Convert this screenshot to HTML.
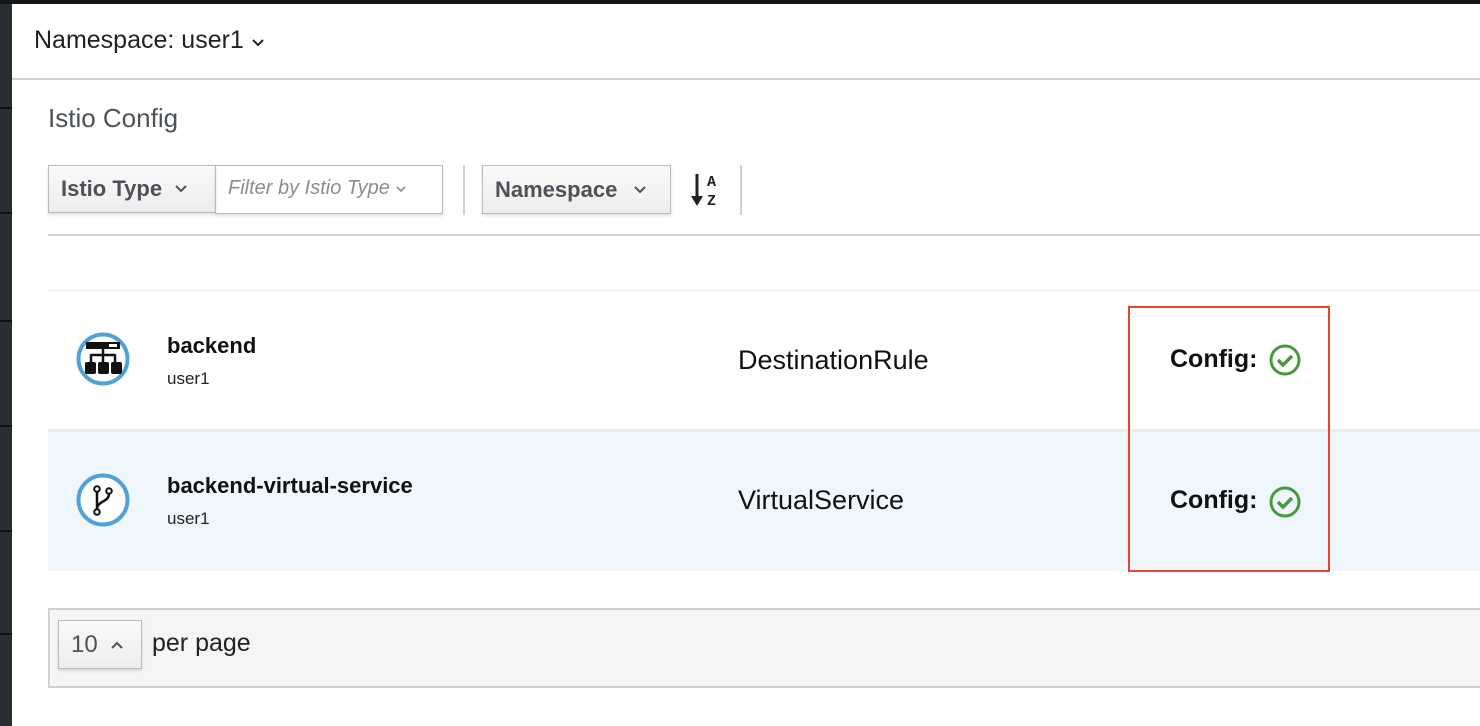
<!DOCTYPE html>
<html><head><meta charset="utf-8"><style>
*{box-sizing:border-box;margin:0;padding:0}
body{width:1480px;height:726px;overflow:hidden;background:#1e1f22;font-family:"Liberation Sans",sans-serif;position:relative}
.strip{position:absolute;left:0;top:0;width:12px;height:726px;background:#292e34}
.strip i{position:absolute;left:0;width:12px;height:2px;background:#111}
.panel{position:absolute;left:12px;top:4px;right:0;bottom:0;background:#fff}
.a{position:absolute;white-space:nowrap}
.btn{position:absolute;border:1px solid #bbb;background:linear-gradient(#fafafa,#ededed);box-shadow:0 2px 3px rgba(0,0,0,.12);color:#4d5258;font-weight:bold;font-size:22px;display:flex;align-items:center}
.chev{display:inline-block}
</style></head><body>
<div class="strip"><i style="top:107px"></i><i style="top:212px"></i><i style="top:320px"></i><i style="top:425px"></i><i style="top:530px"></i><i style="top:633px"></i></div>
<div style="position:absolute;left:0;top:0;width:1480px;height:4px;background:#151515"></div>
<div class="panel"></div>
<div class="a" style="left:34px;top:26px;font-size:25px;color:#222">Namespace: user1 <svg class="chev" width="14" height="10" viewBox="0 0 14 10"><path d="M2 2L7 7L12 2" fill="none" stroke="#222" stroke-width="2"/></svg></div>
<div class="a" style="left:12px;top:78px;width:1468px;height:2px;background:#d1d1d1"></div>
<div class="a" style="left:48px;top:103px;font-size:26px;color:#4d5258">Istio Config</div>

<div class="btn" style="left:48px;top:165px;width:168px;height:48px;padding-left:12px">Istio Type <svg class="chev" style="margin-left:12px" width="14" height="10" viewBox="0 0 14 10"><path d="M2 2L7 7L12 2" fill="none" stroke="#4d5258" stroke-width="2"/></svg></div>
<div class="a" style="left:215px;top:165px;width:228px;height:49px;border:1px solid #bbb;box-shadow:0 2px 3px rgba(0,0,0,.12);font-style:italic;color:#8b8d8f;font-size:20px;padding:11px 0 0 12px">Filter by Istio Type <svg class="chev" width="12" height="9" viewBox="0 0 12 9"><path d="M2 2L6 6L10 2" fill="none" stroke="#8b8d8f" stroke-width="1.6"/></svg></div>
<div class="a" style="left:463px;top:165px;width:2px;height:50px;background:#d1d1d1"></div>
<div class="btn" style="left:482px;top:165px;width:189px;height:49px;padding-left:12px">Namespace <svg class="chev" style="margin-left:16px" width="14" height="10" viewBox="0 0 14 10"><path d="M2 2L7 7L12 2" fill="none" stroke="#4d5258" stroke-width="2"/></svg></div>
<svg class="a" style="left:690px;top:170px" width="34" height="40" viewBox="0 0 34 40"><path d="M7 4V30" stroke="#222" stroke-width="3"/><path d="M1 26L7 36L13 26Z" fill="#222"/><text x="17" y="16" font-family="Liberation Mono" font-weight="bold" font-size="15" fill="#222">A</text><text x="17" y="35" font-family="Liberation Mono" font-weight="bold" font-size="15" fill="#222">Z</text></svg>
<div class="a" style="left:740px;top:165px;width:2px;height:50px;background:#d1d1d1"></div>
<div class="a" style="left:48px;top:234px;width:1432px;height:2px;background:#d1d1d1"></div>

<div class="a" style="left:48px;top:290px;width:1432px;height:1px;background:#ececec"></div>
<div class="a" style="left:48px;top:429px;width:1432px;height:142px;background:#eff7fd;border-top:3px solid #ececec"></div>

<svg class="a" style="left:76px;top:332px" width="54" height="54" viewBox="0 0 54 54"><circle cx="27" cy="27" r="24.5" fill="#fff" stroke="#4fa1d8" stroke-width="4"/><rect x="10" y="10" width="34" height="7" fill="#111"/><rect x="33" y="12" width="8" height="3" fill="#fff"/><path d="M27 17V23M15 23H39M15 22V31M27 22V31M39 22V31" stroke="#111" stroke-width="2.5" fill="none"/><rect x="9" y="30" width="11" height="12" rx="2" fill="#111"/><rect x="22" y="30" width="11" height="12" rx="2" fill="#111"/><rect x="35" y="30" width="11" height="12" rx="2" fill="#111"/></svg>
<div class="a" style="left:167px;top:333px;font-size:22px;font-weight:bold;color:#111">backend</div>
<div class="a" style="left:167px;top:369px;font-size:17px;color:#222">user1</div>
<div class="a" style="left:738px;top:345px;font-size:27px;color:#111">DestinationRule</div>
<div class="a" style="left:1170px;top:345px;font-size:25px;font-weight:bold;color:#111">Config:</div>
<svg class="a" style="left:1268px;top:343px" width="34" height="34" viewBox="0 0 34 34"><circle cx="17" cy="17" r="14" fill="none" stroke="#479b3b" stroke-width="3"/><path d="M10 17L15 22L24 13" fill="none" stroke="#479b3b" stroke-width="3.5"/></svg>

<svg class="a" style="left:76px;top:473px" width="54" height="54" viewBox="0 0 54 54"><circle cx="27" cy="27" r="24.5" fill="#fff" stroke="#4fa1d8" stroke-width="4"/><circle cx="21" cy="16" r="2.8" fill="none" stroke="#111" stroke-width="2"/><circle cx="33" cy="18" r="2.8" fill="none" stroke="#111" stroke-width="2"/><circle cx="21" cy="39" r="2.8" fill="none" stroke="#111" stroke-width="2"/><path d="M21 19V36M33 21C33 29 21 28 21 36" fill="none" stroke="#111" stroke-width="2.5"/></svg>
<div class="a" style="left:167px;top:473px;font-size:22px;font-weight:bold;color:#111">backend-virtual-service</div>
<div class="a" style="left:167px;top:509px;font-size:17px;color:#222">user1</div>
<div class="a" style="left:738px;top:485px;font-size:27px;color:#111">VirtualService</div>
<div class="a" style="left:1170px;top:486px;font-size:25px;font-weight:bold;color:#111">Config:</div>
<svg class="a" style="left:1268px;top:485px" width="34" height="34" viewBox="0 0 34 34"><circle cx="17" cy="17" r="14" fill="none" stroke="#479b3b" stroke-width="3"/><path d="M10 17L15 22L24 13" fill="none" stroke="#479b3b" stroke-width="3.5"/></svg>

<div class="a" style="left:1128px;top:306px;width:202px;height:266px;border:2px solid #e8442e"></div>

<div class="a" style="left:48px;top:608px;width:1440px;height:80px;background:#f5f5f5;border:2px solid #d1d1d1"></div>
<div class="btn" style="left:58px;top:620px;width:84px;height:49px;padding-left:12px;font-weight:normal;font-size:24px">10 <svg class="chev" style="margin-left:12px" width="14" height="10" viewBox="0 0 14 10"><path d="M2 8L7 3L12 8" fill="none" stroke="#4d5258" stroke-width="2"/></svg></div>
<div class="a" style="left:152px;top:629px;font-size:25px;color:#222">per page</div>
</body></html>
